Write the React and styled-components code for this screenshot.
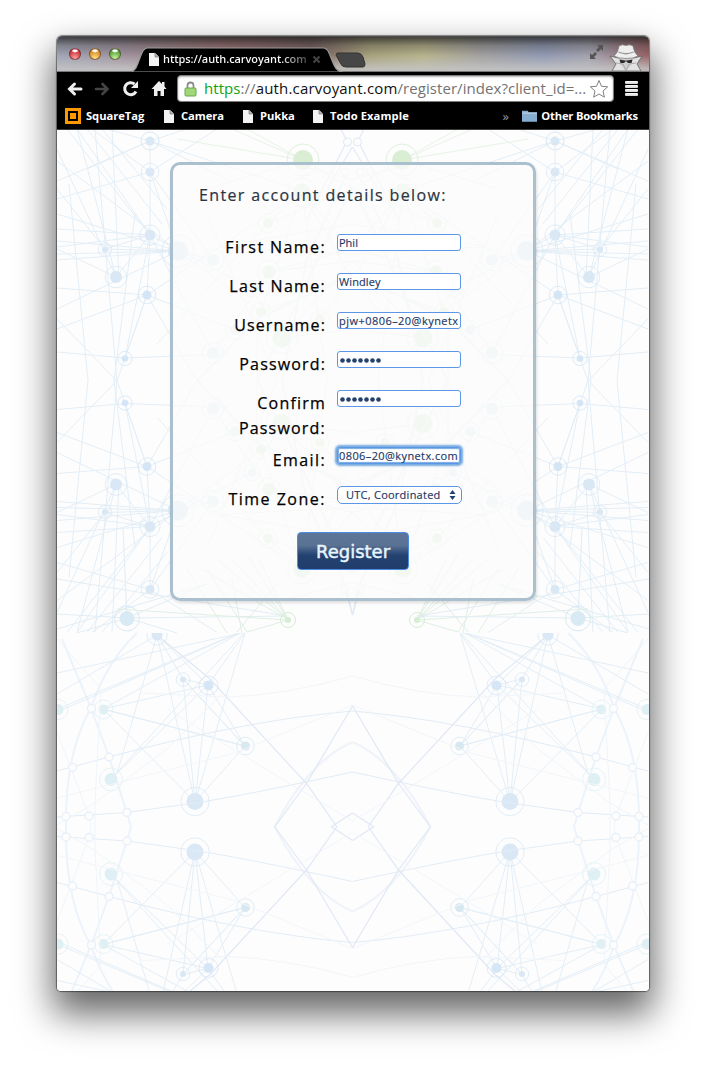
import React from 'react';
import styled, { createGlobalStyle } from 'styled-components';

const Global = createGlobalStyle`
  * { box-sizing: border-box; }
  body { margin: 0; background: #fff; }
`;

const ui = `'Open Sans', 'Noto Sans', sans-serif`;

const Desktop = styled.div`
  width: 706px;
  height: 1070px;
  padding: 36px 57px 79px;
  background: #fff;
  overflow: hidden;
  font-family: ${ui};
`;

const Window = styled.div`
  width: 592px;
  height: 955px;
  border-radius: 5px 5px 4px 4px;
  box-shadow: 0 0 1px 1px rgba(0, 0, 0, 0.45), 0 19px 36px 4px rgba(0, 0, 0, 0.6);
`;

const WindowClip = styled.div`
  height: 100%;
  border-radius: inherit;
  overflow: hidden;
  display: flex;
  flex-direction: column;
  background: #fdfdfe;
`;

const TitleBar = styled.header`
  height: 35px;
  flex: none;
  display: flex;
  align-items: flex-start;
  border-top: 1px solid #4c4c4c;
  background:
    linear-gradient(180deg, rgba(30, 30, 30, 0.75) 0%, rgba(60, 60, 60, 0.35) 25%, rgba(170, 170, 170, 0.1) 55%, rgba(196, 196, 196, 0.85) 92%),
    linear-gradient(90deg, #a2a6b8 0%, #a08f9b 12%, #9c6f6e 28%, #775c5c 43%, #a9a27a 53%, #b8b489 62%, #a2a0a0 72%, #8f99b5 82%, #a2a0ae 90%, #955c60 100%);
`;

const Lights = styled.div`
  display: flex;
  gap: 8px;
  padding: 11px 0 0 12px;
  width: 75px;
`;

const Light = styled.i`
  width: 12px;
  height: 12px;
  border-radius: 50%;
  border: 1px solid rgba(60, 30, 30, 0.55);
  background: radial-gradient(ellipse 4px 2px at 50% 18%, #fff 40%, transparent 100%),
    radial-gradient(circle at 50% 90%, ${p => p.$glow} 0%, ${p => p.$tone} 75%);
`;

const TabStrip = styled.div`
  position: relative;
  width: 240px;
  height: 34px;
`;

const TabShape = styled.svg`
  position: absolute;
  inset: 0;
`;

const TabContent = styled.div`
  position: relative;
  display: flex;
  align-items: center;
  height: 22px;
  margin: 11px 0 0 16px;
  color: #fff;
`;

const TabTitle = styled.span`
  width: 149px;
  margin-left: 3px;
  margin-top: -1px;
  white-space: nowrap;
  font-size: 11px;
  font-weight: 600;
  letter-spacing: -0.08px;
  background: linear-gradient(90deg, #fff 78%, #222 100%);
  background-clip: text;
  color: transparent;
`;

const TitleIcons = styled.div`
  margin-left: auto;
  display: flex;
  padding: 7px 6px 0 0;
  gap: 5px;
`;

const Toolbar = styled.nav`
  height: 35px;
  flex: none;
  display: flex;
  align-items: center;
  background: #000;
  border-top: 1px solid #777;
  padding: 0 11px 1px 9px;
`;

const ToolIcon = styled.svg`
  flex: none;
  margin-right: ${p => p.$gap || 0}px;
`;

const AddressBar = styled.div`
  width: 437px;
  height: 27px;
  display: flex;
  align-items: center;
  margin-right: 11px;
  padding: 0 4px 0 6px;
  background: #fff;
  border: 1px solid #7d7d7d;
  border-radius: 4px;
  box-shadow: inset 0 1px 2px rgba(0, 0, 0, 0.3);
`;

const Url = styled.span`
  flex: 1;
  margin-left: 7px;
  margin-top: -1px;
  font-size: 15px;
  letter-spacing: 0.06px;
  white-space: nowrap;
  color: #737373;
  b { font-weight: 400; color: #111; letter-spacing: 0.18px; }
  em { font-style: normal; color: #10a310; }
`;

const Bars = styled.div`
  width: 13px;
  display: grid;
  gap: 1px;
`;

const Bar = styled.i`
  height: 3px;
  border-radius: 1px;
  background: linear-gradient(#fff, #cfcfcf);
`;

const Bookmarks = styled.nav`
  height: 23px;
  flex: none;
  display: flex;
  align-items: center;
  padding: 0 11px 3px 8px;
  background: #000;
  box-shadow: 0 1px 0 #3c3c3c;
  position: relative;
  z-index: 1;
`;

const Bookmark = styled.span`
  display: flex;
  align-items: center;
  gap: ${p => p.$gap || 6}px;
  width: ${p => p.$width}px;
  white-space: nowrap;
  font-size: 11.2px;
  line-height: 16px;
  font-weight: 700;
  letter-spacing: ${p => p.$spacing || -0.05}px;
  color: #fff;
`;

const Overflow = styled.span`
  margin-left: auto;
  margin-right: 13px;
  color: #999;
  font-size: 13px;
`;

const Page = styled.main`
  position: relative;
  flex: 1;
  padding: 33px 0 0 113px;
`;

const Backdrop = styled.svg`
  position: absolute;
  left: 0;
  top: 0;
`;

const Card = styled.form`
  position: relative;
  width: 366px;
  height: 439px;
  padding: 19px 26px;
  border: 3px solid #abc0ce;
  border-radius: 10px;
  background: rgba(251, 251, 251, 0.74);
  background-clip: padding-box;
  box-shadow: 1px 2px 3px rgba(0, 0, 0, 0.12);
`;

const Heading = styled.h1`
  margin: 0 0 28px;
  height: 22px;
  line-height: 22px;
  font-size: 16px;
  font-weight: 400;
  letter-spacing: 1.36px;
  color: #2b3441;
  -webkit-text-stroke: 0.2px #2b3441;
`;

const Field = styled.div`
  display: flex;
  height: ${p => p.$height || 39}px;
`;

const Label = styled.label`
  width: 127px;
  padding-top: 1px;
  text-align: right;
  font-size: 16px;
  font-weight: 500;
  line-height: 25px;
  letter-spacing: ${p => p.$spacing || 1.4}px;
  color: #000;
  -webkit-text-stroke: 0.25px #000;
`;

const Control = styled.span`
  width: 124px;
  height: 17px;
  margin-left: 11px;
  overflow: hidden;
  padding: 0 1px;
  border: 1px solid #5c96e6;
  border-radius: 3px;
  background: #fff;
  color: #1c3564;
  font-size: 11px;
  line-height: 16px;
  letter-spacing: ${p => p.$spacing || 0}px;
  white-space: nowrap;
  box-shadow: ${p => p.$focused ? '0 0 2px 2px #75aae0, inset 0 0 1px 1px #75aae0' : 'none'};
  -webkit-text-stroke: 0.15px #1c3564;
`;

const Secret = styled(Control)`
  display: flex;
  align-items: center;
  gap: 1px;
  padding: 2px 0 0 2px;
`;

const Dot = styled.i`
  width: 5px;
  height: 5px;
  border-radius: 50%;
  background: #24406e;
  transform: scale(0.92);
`;

const Select = styled(Control)`
  display: flex;
  justify-content: space-between;
  width: 125px;
  height: 18px;
  padding: 0 5px 0 8px;
  border-radius: 5px;
`;

const Register = styled.button`
  display: block;
  width: 112px;
  height: 38px;
  margin: 7px 0 0 98px;
  padding: 1px 0 0;
  border: 1px solid #4b8be4;
  border-radius: 4px;
  background: linear-gradient(#5d7596 0%, #5a7293 34%, #234271 62%, #203d6b 100%);
  color: #e6f4fb;
  font: 500 18px 'DejaVu Sans', sans-serif;
  letter-spacing: 0;
  -webkit-text-stroke: 0.5px #e6f4fb;
`;

const Doc = () => (
  <svg width="12" height="15" viewBox="0 0 12 15"><path d="M1 1h6l4 4v9H1z" fill="#f3f3f3" /><path d="M7 1v4h4" fill="#bbb" stroke="#666" strokeWidth=".6" /></svg>
);

const blue = '#d9e8f4';
const teal = '#def0f3';
const green = '#dff0da';

const lowerNodes = [
  [100, 6, 5.5, blue], [126, 50.5, 3, blue], [151.5, 56.5, 5, '#d5e6f6'],
  [46.5, 80.5, 5, teal], [1, 80.5, 5.5, teal], [188.5, 117, 4.5, '#d7e8f1'],
  [54, 150.5, 6.5, teal], [138, 172.5, 8.5, blue],
];

const lowerLinks = [
  'M100 6L126 50L188 117M100 6L151 56M100 6L138 173M100 6L60 145M100 6L0 65',
  'M185 4L0 44M183 4L46 80M187 4L54 150M181 4L1 80M182 4L0 83M188 4L151 56M188 4L138 173',
  'M126 50L138 173M151 56L138 173M126 50L151 56L46 80L138 173L188 117L46 80M151 56L54 150M126 50L188 117L151 56M46 80L188 117',
];

const upperNodes = [
  [93, 43, 4.5, blue], [93, 106, 5.5, blue], [121, 122, 10, blue],
  [48, 120.5, 3, blue], [59, 148, 6, blue], [90, 166, 4.5, '#d4e6f5'], [68, 229.5, 3.3, '#d4e6f5'],
  [245, 63, 8.5, green], [211, 94, 5, green], [156, 131, 6, teal], [212, 143, 6.5, green],
  [204, 183, 5, green], [178, 201, 5, teal], [225, 209, 9.5, green], [156, 224, 6, teal],
  [263, 190, 4.5, green], [195, 160, 4, teal],
];

const upperLinks = [
  'M93 43V106L90 166L68 229L0 223M93 43L35 0M93 106L0 100M93 106L59 148L0 120M121 122L0 112M121 122L0 180M90 166L0 200M90 166L60 252L38 0',
  'M59 148L0 20M59 148L20 0M48 120L0 60M121 122L0 85M93 43L0 70M93 106L20 0M121 122L0 32M90 166L0 159M93 43L121 122L48 120L93 106M55 0L62 150',
  'M90 166L140 252M68 229L170 225M68 229L93 106M0 190L60 252M93 106L10 0M12 55L31 252M57 252L78 85M93 106L0 118M121 122L0 125M121 122L0 131M45 0L110 80M30 0L105 95',
  'M93 43L156 131L121 122M245 63L90 166L178 201M211 94L245 63L295 120L212 143M156 224L93 106L195 160L225 209M93 43L160 0',
  'M212 143L295 132L225 209L295 200M204 183L121 122M211 94L100 215M245 63L204 183L295 150L263 190M212 143L156 224M245 63L295 150M211 94L295 60',
];

const Cluster = ({ nodes, links }) => (
  <g fill="none">
    {links.map((d, i) => <path key={i} d={d} stroke={i === 4 ? '#e7f1e9' : '#e3eef6'} strokeWidth="1" />)}
    {nodes.map(([x, y, r, c], i) => (
      <g key={i}><circle cx={x} cy={y} r={r * 1.35 + 2.7} stroke={c} strokeWidth=".8" /><circle cx={x} cy={y} r={r} fill={c} /></g>
    ))}
  </g>
);

const rings = [[34.5, 79.5], [15.5, 138.5], [52, 128], [9, 187.5], [32, 187], [70, 183.5]];

const LowerHalf = () => (
  <g fill="none">
    <path d="M295.500 113Q252 132 217.500 198" stroke="#f0f3fa" strokeWidth="2.200" />
    <path d="M5 10L34 79L52 128L70 184L74 198M80 4Q50 32 34 79Q8 124 9 198" stroke="#edf3fa" strokeWidth="2" />
    <Cluster nodes={lowerNodes} links={lowerLinks} />
    <path d="M295.500 82Q190 91 52 128L0 142M295.500 143Q190 166 138 174L70 183.500L0 188" stroke="#e2ecf5" />
    <path d="M295.500 77L249.500 154.500L217.500 198M100 6L153 50L249.500 154.500L280 198M295.500 184L274 198" stroke="#e0e8f5" strokeWidth="1.200" />
    <path d="M295.500 47Q230 66 170 68L85 64M295.500 76L178 124L0 169M295.500 192L235 156L110 80" stroke="#f2f5f9" />
    <path d="M34 198L32 187L0 103M38 198V174L44 60L0 10M165 65L110 120L38 174L0 196" stroke="#eff5f9" />
    {rings.map(([x, y]) => <circle key={x + '-' + y} cx={x} cy={y} r="4" fill="#fdfdfe" stroke="#e8f0f9" strokeWidth="1.4" />)}
  </g>
);

const UpperHalf = () => (
  <g fill="none">
    <Cluster nodes={upperNodes} links={upperLinks} />
    <path d="M295.500 58L265 120L240 175L200 252M290 44L250 130L225 252M295.500 145L200 190L140 252" stroke="#e9eff7" strokeWidth="1.6" />
    <path d="M295 50L235 35M295 95L162 118L295 125M200 190V252M150 85L220 252M245 63L270 252" stroke="#eef3e5" />
    <circle cx="288" cy="43" r="4" fill="#fdfdfe" stroke="#e5ecf7" />
  </g>
);

const TopEdge = () => (
  <g fill="none">
    <path d="M246 31L190 0M246 31L150 60M246 31L175 0M246 31L120 10M246 31L295 60" stroke="#e8f2e6" />
    <path d="M93 12L30 40M93 12V43M93 12L0 52M93 12L50 0M93 12L130 0M93 12L246 62M93 12L170 50" stroke="#e3eef6" />
    <path d="M284 0L290 12L250 90M295.500 18L270 60" stroke="#e5ecf7" strokeWidth="1.400" />
    <circle cx="246" cy="31" r="16" stroke="#e2f0de" />
    <circle cx="246" cy="31" r="10" fill="#d9eed2" />
    <circle cx="93" cy="12" r="9" stroke={blue} />
    <circle cx="93" cy="12" r="4.500" fill={blue} />
    <circle cx="290.500" cy="13" r="4" fill="#fdfdfe" stroke="#e0e8f5" />
  </g>
);

const Network = () => (
  <Backdrop width="592" height="863" viewBox="0 0 592 863">
    <defs>
      <g id="upperLeft"><UpperHalf /></g>
      <g id="lowerLeft"><LowerHalf /></g>
      <g id="topLeft"><TopEdge /></g>
      <g id="upper"><use href="#upperLeft" /><use href="#upperLeft" transform="translate(591 0) scale(-1 1)" /></g>
      <g id="lower"><use href="#lowerLeft" /><use href="#lowerLeft" transform="translate(591 0) scale(-1 1)" /></g>
      <clipPath id="topBand"><rect width="592" height="504" /></clipPath>
      <clipPath id="topFold"><rect width="592" height="252" /></clipPath>
      <clipPath id="bottomFold"><rect y="504" width="592" height="194" /></clipPath>
    </defs>
    <g clipPath="url(#topBand)">
      <g clipPath="url(#topFold)"><use href="#upper" /></g>
      <g transform="translate(0 503.5) scale(1 -1)"><g clipPath="url(#topFold)"><use href="#upper" /></g></g>
      <use href="#topLeft" /><use href="#topLeft" transform="translate(591 0) scale(-1 1)" />
      <g fill="none" stroke="#e2edf3">
        <path d="M70 489L0 485M70 489L230 487L0 450M70 489L20 504M70 489L66 400M70 489L150 455L0 500M70 489L120 504" />
        <path d="M231 491L145 440M231 491L160 430M231 491L175 430M231 491L190 425M231 491L202 430M231 491L60 480M231 491L190 503L150 440M180 503L220 455M170 504L130 440M185 504L175 450" stroke="#e0efe3" />
        <path d="M360 491L446 440M360 491L431 430M360 491L416 430M360 491L401 425M360 491L389 430M360 491L531 480M360 491L401 503L441 440M411 503L371 455M421 504L461 440M406 504L416 450" stroke="#e0efe3" />
        <path d="M289 460L295.500 486L302 460" stroke="#e1e9f4" strokeWidth="1.600" />
        <path d="M521 489L592 485M521 489L360 487L592 450M521 489L571 504M521 489L525 400M521 489L441 455L592 500" />
      </g>
      {[[70, 489.5, 7.5, '#d8eaf3'], [231, 491, 3, '#d5edd0'], [360, 491, 3, '#d5edd0'], [521, 489.5, 7.5, '#d8eaf3']].map(([x, y, r, c]) => (
        <g key={x}><circle cx={x} cy={y} r={r * 1.1 + 4.2} fill="none" stroke={c} /><circle cx={x} cy={y} r={r} fill={c} /></g>
      ))}
    </g>
    <g clipPath="url(#bottomFold)"><use href="#lower" y="500" /></g>
    <g transform="translate(0 1395.5) scale(1 -1)"><g clipPath="url(#bottomFold)"><use href="#lower" y="500" /></g></g>
  </Backdrop>
);

const Chrome = () => (
  <>
    <TitleBar>
      <Lights>
        <Light $tone="#c92c38" $glow="#ffa09a" />
        <Light $tone="#d48420" $glow="#ffe084" />
        <Light $tone="#4d9b32" $glow="#c9f39b" />
      </Lights>
      <TabStrip>
        <TabShape width="240" height="35">
          <path d="M-2 35C5 34 5 27 10 16Q12 11 16 11H191Q195 11 197 16C202 27 202 34 211 35Z" fill="#000" stroke="#999" strokeWidth="1.2" />
          <path d="M205 16H226Q229 16 231 20L233 27Q233 30 231 30H214Q210 30 209 27L204 18Z" fill="#464646" stroke="#333" />
        </TabShape>
        <TabContent>
          <Doc />
          <TabTitle>https://auth.carvoyant.com</TabTitle>
          <svg width="9" height="9"><path d="M1.500 1.500l6 6m0-6l-6 6" stroke="#444" strokeWidth="2" /></svg>
        </TabContent>
      </TabStrip>
      <TitleIcons>
        <svg width="15" height="17" viewBox="0 0 15 17"><path d="M8 1h6v6l-2-2-3 3-2-2 3-3zM1 15V9l2 2 3-3 2 2-3 3 2 2z" fill="#555" /></svg>
        <svg width="34" height="27" viewBox="0 0 34 27">
          <path d="M3 27L7 20 1 12l8 2h16l8-2-5 8 4 7z" fill="#e2e2e2" stroke="#555" strokeWidth=".7" />
          <path d="M10 13h14l-1 7-6 7-6-7z" fill="#cfcfcf" />
          <path d="M7 19l7 1 3 7M27 19l-7 1-3 7" fill="none" stroke="#a9a9a9" />
          <path d="M10.500 15.500l5.500 1h2l5.500-1-1 3.500h-3.500l-2-2-2 2h-3.500z" fill="#2b2b2b" />
          <path d="M5 12Q9 9 10 2Q13 0 17 1.500Q21 0 24 2Q25 9 29 12Q25 14.500 17 14.500T5 12z" fill="#eee" stroke="#777" strokeWidth=".7" />
          <path d="M9.500 8Q17 11.500 24.500 8" stroke="#999" strokeWidth="1.300" fill="none" />
        </svg>
      </TitleIcons>
    </TitleBar>
    <Toolbar>
      <ToolIcon $gap={11} width="17" height="16" viewBox="0 0 17 16"><path d="M15 8H4M8.500 3L3.500 8l5 5" fill="none" stroke="#efefef" strokeWidth="3" strokeLinecap="round" /></ToolIcon>
      <ToolIcon $gap={11} width="17" height="16" viewBox="0 0 17 16"><path d="M2 8h11M8.500 3L13.500 8l-5 5" fill="none" stroke="#444" strokeWidth="2.600" strokeLinecap="round" /></ToolIcon>
      <ToolIcon $gap={12} width="17" height="17" viewBox="0 0 17 17"><path d="M14 11.500A6 6 0 1 1 12.500 4" fill="none" stroke="#efefef" strokeWidth="3" /><path d="M16 1v7H9z" fill="#efefef" /></ToolIcon>
      <ToolIcon $gap={10} width="16" height="17" viewBox="0 0 16 17"><path d="M8 1L.5 9H3v7h3.500v-5h3v5H13V9h2.500l-2-2.500V2h-2.500v2z" fill="#efefef" /></ToolIcon>
      <AddressBar>
        <svg width="13" height="16" viewBox="0 0 13 16"><path d="M3.500 8V4.500a3 3 0 0 1 6 0V8" fill="none" stroke="#8c8c8c" strokeWidth="1.800" /><rect x="1" y="7" width="11" height="8" rx="1" fill="#9fd878" stroke="#6aa64b" /></svg>
        <Url><em>https</em>://<b>auth.carvoyant.com</b>/register/index?client_id=...</Url>
        <svg width="20" height="20" viewBox="0 0 20 20"><path d="M10 1.500l2.500 5.800 6.200.5-4.700 4.200 1.400 6.200L10 15l-5.400 3.200L6 12 1.300 7.800l6.200-.5z" fill="#fff" stroke="#808080" /></svg>
      </AddressBar>
      <Bars><Bar /><Bar /><Bar /><Bar /></Bars>
    </Toolbar>
    <Bookmarks>
      <Bookmark $width={98} $gap={5}><svg width="16" height="16"><path d="M1.500 1.500h13v13h-13z" fill="#000" stroke="#ff9800" strokeWidth="3" /><path d="M5 5h6v6H5z" fill="#ff9800" /></svg>SquareTag</Bookmark>
      <Bookmark $width={79}><Doc />Camera</Bookmark>
      <Bookmark $width={70}><Doc />Pukka</Bookmark>
      <Bookmark $width={120} $spacing={0.08}><Doc />Todo Example</Bookmark>
      <Overflow>»</Overflow>
      <Bookmark $width={116} $gap={4} $spacing={-0.18}><svg width="16" height="14" viewBox="0 0 16 14"><path d="M0 13V1.500h6l1 1.500h9v10z" fill="#86aed0" /><path d="M0 4h16" stroke="#c5daea" /></svg>Other Bookmarks</Bookmark>
    </Bookmarks>
  </>
);

const Dots = () => <>{Array.from({ length: 7 }, (_, i) => <Dot key={i} />)}</>;

export default function App() {
  return (
    <>
      <Global />
      <Desktop>
        <Window>
          <WindowClip>
            <Chrome />
            <Page>
              <Network />
              <Card>
                <Heading>Enter account details below:</Heading>
                <Field><Label>First Name:</Label><Control>Phil</Control></Field>
                <Field><Label $spacing={1.3}>Last Name:</Label><Control $spacing={0.1}>Windley</Control></Field>
                <Field><Label $spacing={1.15}>Username:</Label><Control $spacing={0.46}>pjw+0806–20@kynetx</Control></Field>
                <Field><Label $spacing={1.15}>Password:</Label><Secret><Dots /></Secret></Field>
                <Field $height={57}><Label $spacing={1.2}>Confirm Password:</Label><Secret><Dots /></Secret></Field>
                <Field><Label>Email:</Label><Control $focused $spacing={0.4}>0806–20@kynetx.com</Control></Field>
                <Field>
                  <Label $spacing={1.5}>Time Zone:</Label>
                  <Select $spacing={0.25}>UTC, Coordinated<svg width="7" height="12" viewBox="0 0 7 12" style={{ marginTop: 2 }}><path d="M.5 5L3.500 1l3 4zM.5 7l3 4 3-4z" fill="#24406e" /></svg></Select>
                </Field>
                <Register type="button">Register</Register>
              </Card>
            </Page>
          </WindowClip>
        </Window>
      </Desktop>
    </>
  );
}
